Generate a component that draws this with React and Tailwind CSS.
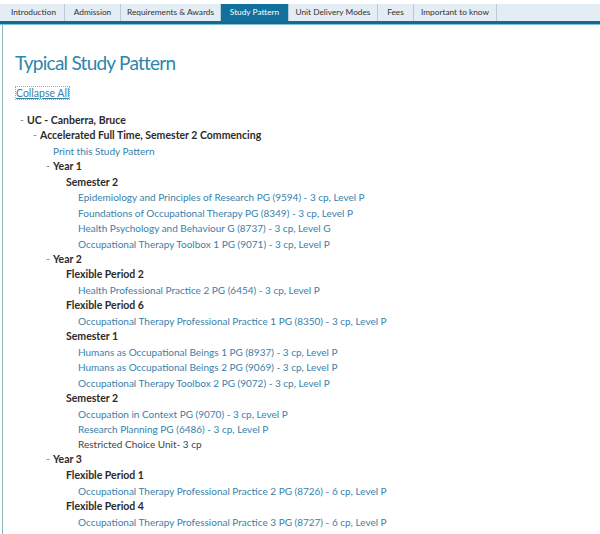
import React from 'react';

const tabs = [
  { label: 'Introduction', w: 'w-[62px]' },
  { label: 'Admission', w: 'w-[56px]' },
  { label: 'Requirements & Awards', w: 'w-[100px]' },
  { label: 'Study Pattern', w: 'w-[68px]', active: true },
  { label: 'Unit Delivery Modes', w: 'w-[89px]' },
  { label: 'Fees', w: 'w-[36px]' },
  { label: 'Important to know', w: 'w-[83px]' },
];

// each row: [type, text]  t1/t2/t3 = collapsible with dash, head = bold label, link, print, plain
const rows = [
  ['t1', 'UC - Canberra, Bruce'],
  ['t2', 'Accelerated Full Time, Semester 2 Commencing'],
  ['print', 'Print this Study Pattern'],
  ['t3', 'Year 1'],
  ['head', 'Semester 2'],
  ['link', 'Epidemiology and Principles of Research PG (9594) - 3 cp, Level P'],
  ['link', 'Foundations of Occupational Therapy PG (8349) - 3 cp, Level P'],
  ['link', 'Health Psychology and Behaviour G (8737) - 3 cp, Level G'],
  ['link', 'Occupational Therapy Toolbox 1 PG (9071) - 3 cp, Level P'],
  ['t3', 'Year 2'],
  ['head', 'Flexible Period 2'],
  ['link', 'Health Professional Practice 2 PG (6454) - 3 cp, Level P'],
  ['head', 'Flexible Period 6'],
  ['link', 'Occupational Therapy Professional Practice 1 PG (8350) - 3 cp, Level P'],
  ['head', 'Semester 1'],
  ['link', 'Humans as Occupational Beings 1 PG (8937) - 3 cp, Level P'],
  ['link', 'Humans as Occupational Beings 2 PG (9069) - 3 cp, Level P'],
  ['link', 'Occupational Therapy Toolbox 2 PG (9072) - 3 cp, Level P'],
  ['head', 'Semester 2'],
  ['link', 'Occupation in Context PG (9070) - 3 cp, Level P'],
  ['link', 'Research Planning PG (6486) - 3 cp, Level P'],
  ['plain', 'Restricted Choice Unit- 3 cp'],
  ['t3', 'Year 3'],
  ['head', 'Flexible Period 1'],
  ['link', 'Occupational Therapy Professional Practice 2 PG (8726) - 6 cp, Level P'],
  ['head', 'Flexible Period 4'],
  ['link', 'Occupational Therapy Professional Practice 3 PG (8727) - 6 cp, Level P'],
];

const Row = ({ type, text }) => {
  if (type === 't1' || type === 't2' || type === 't3') {
    const pad = type === 't1' ? 'pl-[17px]' : type === 't2' ? 'pl-[30px]' : 'pl-[43px]';
    return (
      <div className={`flex h-[15.45px] items-center text-[10.5px] ${pad}`}>
        <span className="w-[7px] text-[#888]">-</span>
        <span className="font-bold text-[#2b2b2b]">{text}</span>
      </div>
    );
  }
  if (type === 'head') {
    return <div className="flex h-[15.45px] items-center pl-[63px] text-[10.5px] font-bold text-[#2b2b2b]">{text}</div>;
  }
  if (type === 'print') {
    return <div className="flex h-[15.45px] items-center pl-[50px] text-[10px] text-[#3a80a9]">{text}</div>;
  }
  if (type === 'plain') {
    return <div className="flex h-[15.45px] items-center pl-[75px] text-[10px] text-[#444]">{text}</div>;
  }
  return <div className="flex h-[15.45px] items-center pl-[75px] text-[10px] text-[#3a80a9]">{text}</div>;
};

const App = () => {
  return (
    <div className="h-[534px] w-[600px] overflow-hidden bg-white font-['Lato',sans-serif]">
      {/* tab bar */}
      <div className="pt-[4px]">
        <div className="flex h-[17px] bg-[#e4edf3] pl-[3px]">
          {tabs.map((t) => (
            <div
              key={t.label}
              className={`flex ${t.w} items-center justify-center border-r border-[#b9cbd6] text-[8.3px] ${
                t.active ? 'bg-[#11709c] text-white' : 'text-[#333]'
              }`}
            >
              {t.label}
            </div>
          ))}
        </div>
        <div className="h-[3px] bg-[#17698f]" />
        <div className="h-[1px] bg-[#7fc3d8]" />
      </div>

      {/* content */}
      <div className="ml-[2px] h-full border-l border-[#8fb3c5] pl-[12px]">
        <h1 className="pt-[26px] text-[19px] leading-[24px] font-normal tracking-[-0.75px] text-[#2d86ad]">
          Typical Study Pattern
        </h1>
        <div className="mt-[12px] text-[10.5px] leading-[13px]">
          <span className="border border-dotted border-[#9ab] text-[#3b7ea3] underline">Collapse All</span>
        </div>
        <div className="mt-[13px] -ml-[12px]">
          {rows.map(([type, text], i) => (
            <Row key={i} type={type} text={text} />
          ))}
        </div>
      </div>
    </div>
  );
};

export default App;
